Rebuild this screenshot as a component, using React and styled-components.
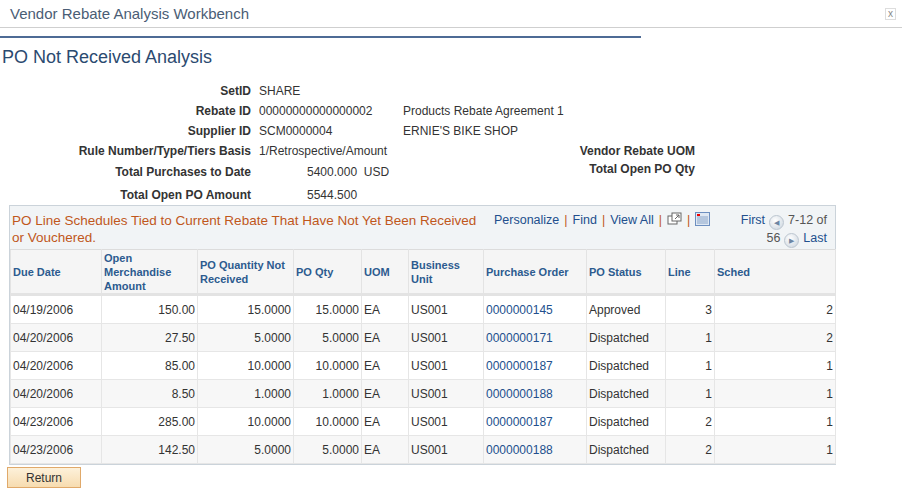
import React from "react";
import styled, { createGlobalStyle } from "styled-components";

const G = createGlobalStyle`
  body{margin:0;font-family:Arial,"Liberation Sans",sans-serif;font-size:12px;color:#333;background:#fff;}
`;
const TitleBar = styled.div`height:27px;border-bottom:1px solid #cfcfcf;display:flex;align-items:center;justify-content:space-between;padding:0 6px 0 10px;color:#4a5d75;font-size:15px;`;
const Close = styled.span`font-size:10px;color:#888;border:1px solid #ddd;width:9px;height:10px;line-height:9px;text-align:center;`;
const Rule = styled.div`width:641px;height:2px;background:#4e6b95;margin-top:8px;`;
const H1 = styled.h1`margin:9px 0 0 2px;font-size:18px;font-weight:normal;color:#2b4a70;height:22px;`;
const Form = styled.div`display:grid;grid-template-columns:259px 144px 292px 4px;margin-top:12px;`;
const L = styled.div`font-weight:bold;text-align:right;padding-right:8px;height:${p=>p.h||20}px;line-height:${p=>p.h?p.h-2:20}px;white-space:nowrap;color:#333;`;
const V = styled.div`height:${p=>p.h||20}px;line-height:${p=>p.h?p.h-2:20}px;white-space:nowrap;padding-left:${p=>p.pl||0}px;`;
const R = styled.div`font-weight:bold;text-align:right;height:${p=>p.h||20}px;line-height:${p=>p.h?p.h-2:20}px;white-space:nowrap;`;
const Grid = styled.div`margin:0 0 0 9px;width:825px;border:1px solid #cbd3da;`;
const Cap = styled.div`background:#f1f4f6;height:43px;display:flex;padding:6px 2px 0 2px;box-sizing:border-box;`;
const CapTitle = styled.div`color:#c0571b;font-size:13.5px;line-height:17px;width:470px;`;
const Nav = styled.div`display:flex;align-items:flex-start;margin-left:12px;color:#224f8d;font-size:12.5px;line-height:17px;white-space:nowrap;`;
const Sep = styled.span`color:#c0571b;margin:0 5px;`;
const Pager = styled.div`margin-left:auto;text-align:right;color:#224f8d;font-size:12.5px;line-height:17px;padding-right:6px;`;
const Gray = styled.span`color:#555;`;
const Circ = styled.span`display:inline-block;width:13px;height:13px;border-radius:50%;background:radial-gradient(circle at 40% 35%,#fff,#c9d3dd);border:1px solid #bcc6d0;vertical-align:-1px;margin:0 4px;font-size:7px;color:#6d86a4;line-height:13px;text-align:center;`;
const T = styled.table`border-collapse:collapse;width:100%;table-layout:fixed;`;
const Th = styled.th`background:#f5f5f5;color:#2c5b8f;font-size:11px;font-weight:bold;text-align:left;vertical-align:middle;height:43px;padding:0 2px;line-height:14px;border:1px solid #e3e3e3;border-top:1px solid #dcdcdc;border-bottom:3px solid #e3e3e3;`;
const Td = styled.td`height:27px;padding:0 2px;border:1px solid #e6e6e6;text-align:${p=>p.r?"right":"left"};color:${p=>p.link?"#224f8d":"#333"};white-space:nowrap;background:${p=>p.alt?"#f7f7f7":"#fff"};`;
const Btn = styled.button`margin:2px 0 0 7px;width:74px;height:21px;background:linear-gradient(#fdf1da,#f7dcb0);border:1px solid #e0a96a;font-family:inherit;font-size:12px;color:#333;`;

const cols=[91,96,96,68,47,75,103,79,49,121];
const rows=[
["04/19/2006","150.00","15.0000","15.0000","0000000145","Approved","3","2"],
["04/20/2006","27.50","5.0000","5.0000","0000000171","Dispatched","1","2"],
["04/20/2006","85.00","10.0000","10.0000","0000000187","Dispatched","1","1"],
["04/20/2006","8.50","1.0000","1.0000","0000000188","Dispatched","1","1"],
["04/23/2006","285.00","10.0000","10.0000","0000000187","Dispatched","2","1"],
["04/23/2006","142.50","5.0000","5.0000","0000000188","Dispatched","2","1"]];

export default function App(){
  return <>
    <G/>
    <TitleBar><span>Vendor Rebate Analysis Workbench</span><Close>x</Close></TitleBar>
    <Rule/>
    <H1>PO Not Received Analysis</H1>
    <Form>
      <L>SetID</L><V>SHARE</V><V/><V/>
      <L>Rebate ID</L><V>00000000000000002</V><V>Products Rebate Agreement 1</V><V/>
      <L>Supplier ID</L><V>SCM0000004</V><V>ERNIE'S BIKE SHOP</V><V/>
      <L>Rule Number/Type/Tiers Basis</L><V>1/Retrospective/Amount</V><R>Vendor Rebate UOM</R><V/>
      <L h={24}>Total Purchases to Date</L><V h={24} pl={48}>5400.000&nbsp;&nbsp;USD</V><R h={18}>Total Open PO Qty</R><V/>
      <L>Total Open PO Amount</L><V pl={48}>5544.500</V><V/><V/>
    </Form>
    <Grid>
      <Cap>
        <CapTitle>PO Line Schedules Tied to Current Rebate That Have Not Yet Been Received or Vouchered.</CapTitle>
        <Nav>Personalize<Sep>|</Sep>Find<Sep>|</Sep>View All<Sep>|</Sep>
          <svg width="15" height="13" viewBox="0 0 15 13"><rect x="1" y="4" width="9" height="8" fill="#fff" stroke="#666"/><rect x="5" y="1" width="9" height="8" fill="#fff" stroke="#666"/><path d="M8 7 L12 3 M9 3h3v3" stroke="#666" fill="none"/></svg>
          <Sep>|</Sep>
          <svg width="15" height="14" viewBox="0 0 15 14"><rect x="0.5" y="0.5" width="14" height="13" fill="#dfe8f3" stroke="#6d8fc0"/><rect x="2" y="2" width="3" height="2" fill="#e00"/><path d="M2 5h11M2 7h11M2 9h11M2 11h11" stroke="#8aa4c8"/></svg>
        </Nav>
        <Pager>First<Circ>◀</Circ><Gray>7-12 of</Gray><br/><Gray>56</Gray><Circ>▶</Circ>Last</Pager>
      </Cap>
      <T>
        <colgroup>{cols.map((w,i)=><col key={i} style={{width:w}}/>)}</colgroup>
        <thead><tr>
          <Th>Due Date</Th><Th>Open Merchandise Amount</Th><Th>PO Quantity Not Received</Th><Th>PO Qty</Th><Th>UOM</Th><Th>Business Unit</Th><Th>Purchase Order</Th><Th>PO Status</Th><Th>Line</Th><Th>Sched</Th>
        </tr></thead>
        <tbody>{rows.map((r,i)=>{const a=i%2===1;return <tr key={i}>
          <Td alt={a}>{r[0]}</Td><Td alt={a} r>{r[1]}</Td><Td alt={a} r>{r[2]}</Td><Td alt={a} r>{r[3]}</Td><Td alt={a}>EA</Td><Td alt={a}>US001</Td><Td alt={a} link>{r[4]}</Td><Td alt={a}>{r[5]}</Td><Td alt={a} r>{r[6]}</Td><Td alt={a} r>{r[7]}</Td>
        </tr>})}</tbody>
      </T>
    </Grid>
    <Btn>Return</Btn>
  </>;
}
